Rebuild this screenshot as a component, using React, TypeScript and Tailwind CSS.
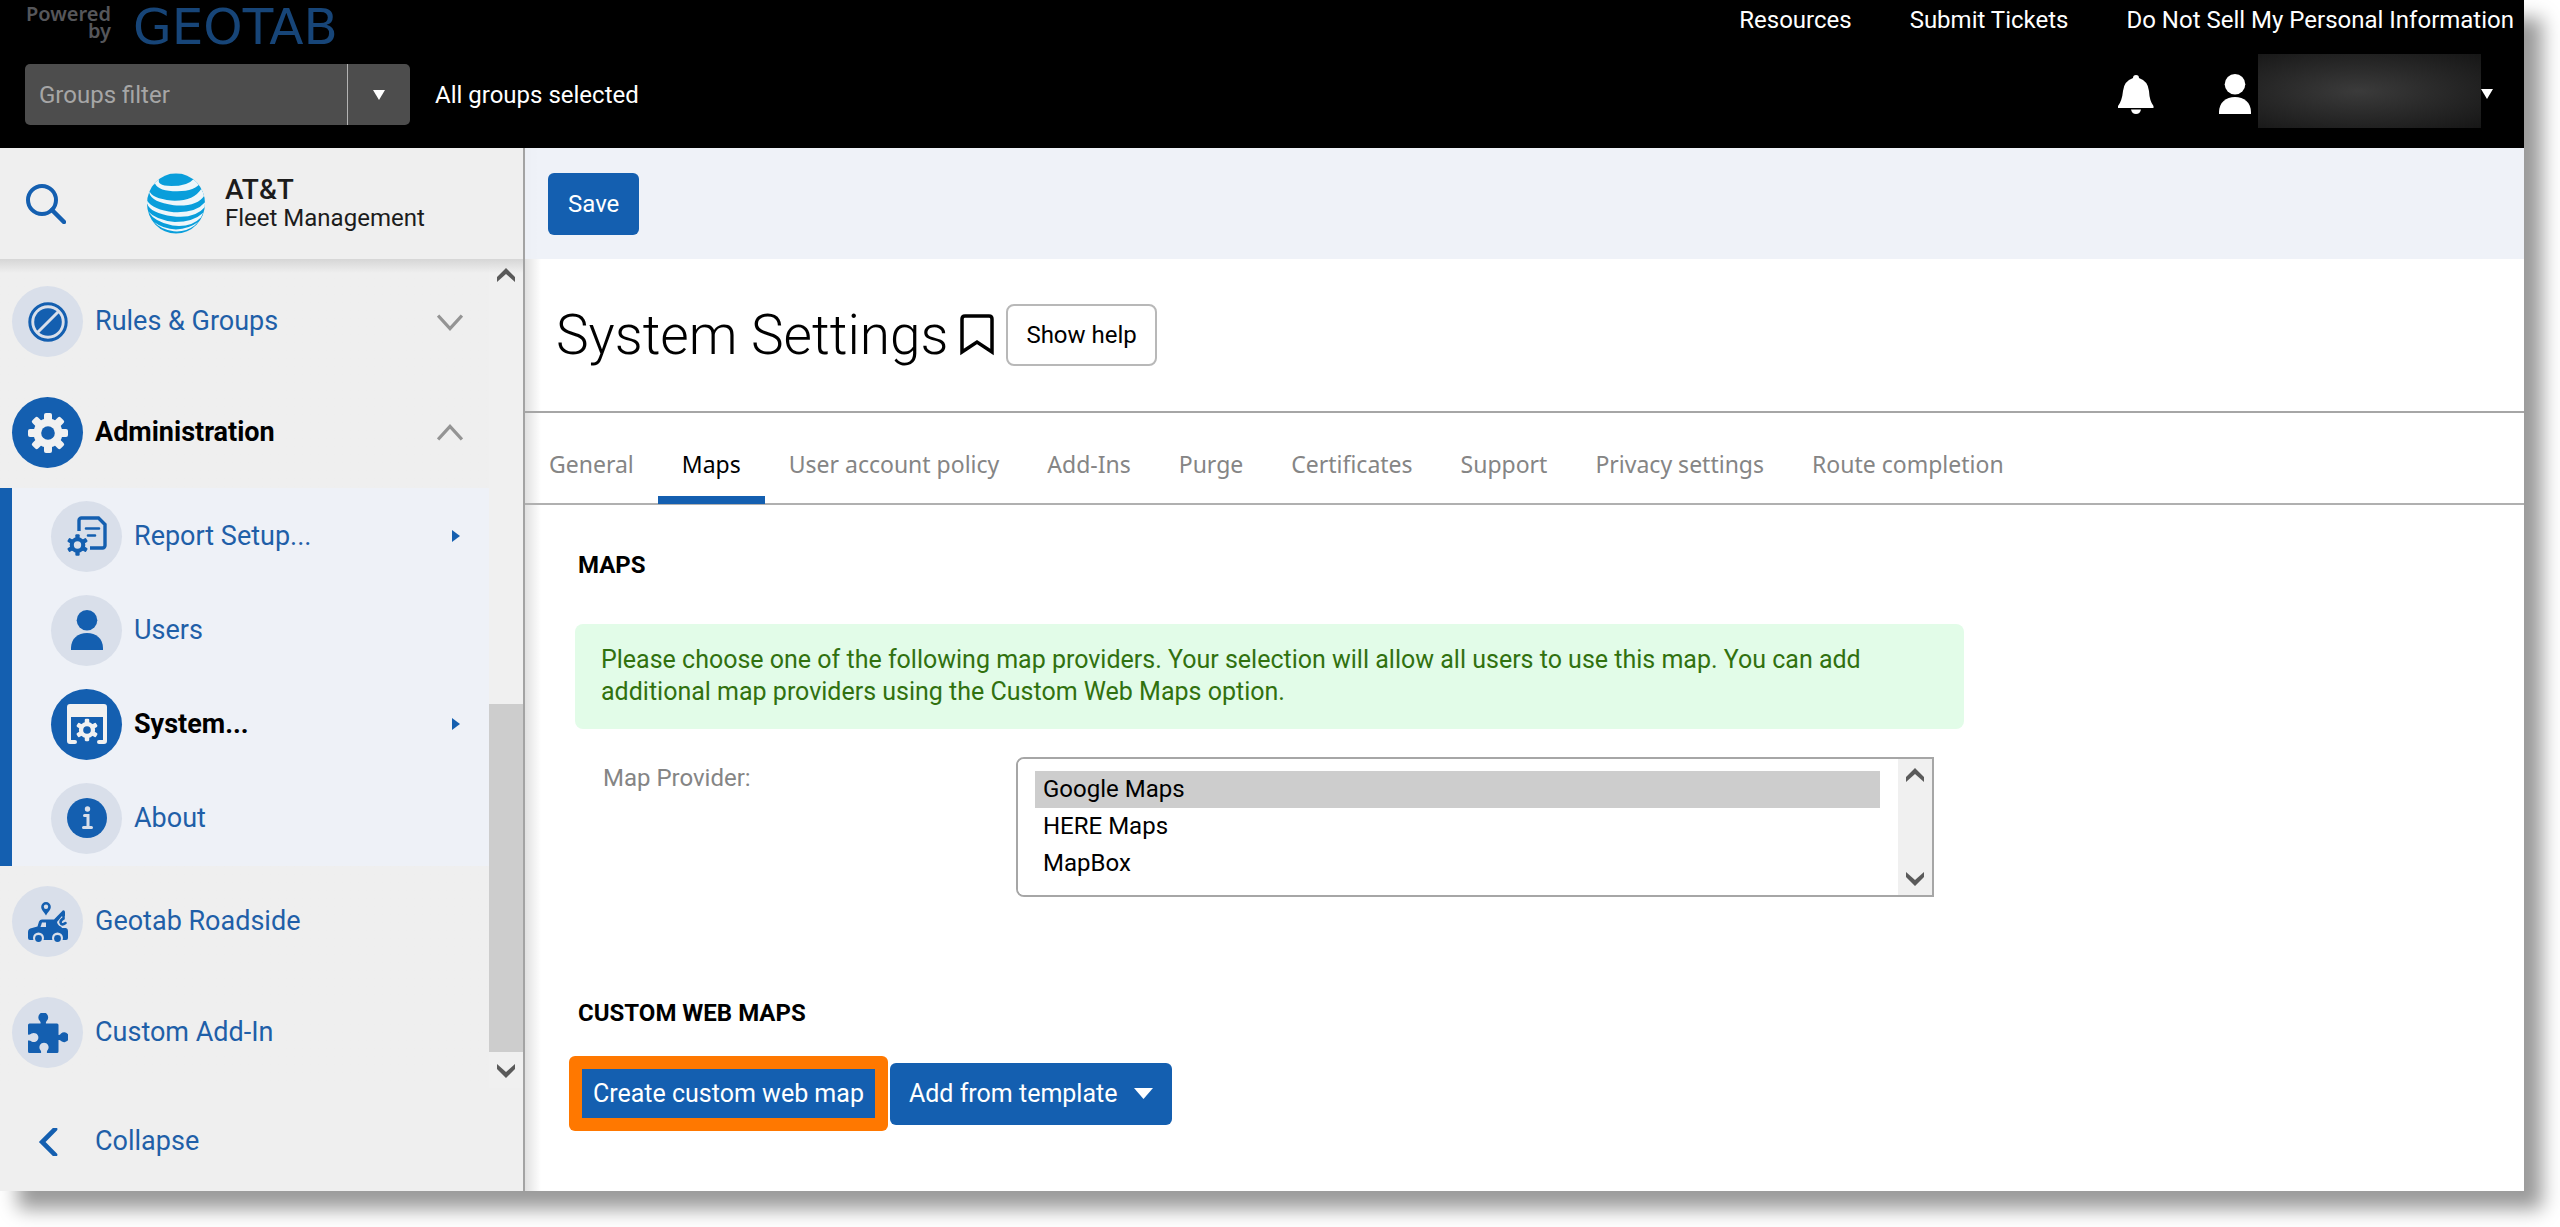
import { useState, type ReactNode } from 'react'
import clsx from 'clsx'

const TOP_LINKS = ['Resources', 'Submit Tickets', 'Do Not Sell My Personal Information']

const TABS = [
  'General',
  'Maps',
  'User account policy',
  'Add-Ins',
  'Purge',
  'Certificates',
  'Support',
  'Privacy settings',
  'Route completion',
]

const MAP_PROVIDERS = ['Google Maps', 'HERE Maps', 'MapBox']

function GearShape({ teeth, color, hole }: { teeth: number; color: string; hole: string }) {
  const angles = Array.from({ length: teeth }, (_, i) => (360 / teeth) * i)
  return (
    <g>
      {angles.map((angle) => (
        <rect
          key={angle}
          x="-4"
          y="-20"
          width="8"
          height="12"
          rx="2"
          fill={color}
          transform={`rotate(${angle})`}
        />
      ))}
      <circle r="14.5" fill={color} />
      <circle r="6.8" fill={hole} />
    </g>
  )
}

function RulesIcon() {
  return (
    <svg viewBox="0 0 40 40" className="size-10" aria-hidden="true">
      <circle cx="20" cy="20" r="18.2" fill="none" stroke="#145fb0" strokeWidth="3" />
      <circle cx="20" cy="20" r="13.8" fill="#145fb0" />
      <path d="M9 31 31 9" stroke="#d9dfea" strokeWidth="3" />
    </svg>
  )
}

function AdminIcon() {
  return (
    <svg viewBox="-20 -20 40 40" className="size-10" aria-hidden="true">
      <GearShape teeth={8} color="#f1f1f1" hole="#145fb0" />
    </svg>
  )
}

function ReportIcon() {
  return (
    <svg viewBox="0 0 40 40" className="size-10" fill="none" aria-hidden="true">
      <path
        d="M12 15V4.500A2.500 2.500 0 0 1 14.500 2H31.500L38 8.500V29.500A2.500 2.500 0 0 1 35.500 32H23"
        stroke="#145fb0"
        strokeWidth="3.400"
      />
      <path d="M19 12.500H32M21 19.500H28" stroke="#145fb0" strokeWidth="2.600" strokeLinecap="round" />
      <g transform="translate(10.500 29) scale(.54)">
        <GearShape teeth={6} color="#145fb0" hole="#d9dfea" />
      </g>
    </svg>
  )
}

function PersonIcon({ className }: { className: string }) {
  return (
    <svg viewBox="0 0 34 40" className={className} fill="currentColor" aria-hidden="true">
      <circle cx="17" cy="10.300" r="10.300" />
      <path d="M1 40V38C1 28.500 8 23 17 23S33 28.500 33 38V40Z" />
    </svg>
  )
}

function SystemIcon() {
  return (
    <svg viewBox="0 0 40 40" className="size-10" aria-hidden="true">
      <path
        d="M3 0H37A3 3 0 0 1 40 3V37A3 3 0 0 1 37 40H32A2 2 0 0 1 32 36H36V13H4V36H8A2 2 0 0 1 8 40H3A3 3 0 0 1 0 37V3A3 3 0 0 1 3 0Z"
        fill="#f1f1f1"
      />
      <g transform="translate(20 26) scale(.56)">
        <GearShape teeth={6} color="#f1f1f1" hole="#145fb0" />
      </g>
    </svg>
  )
}

function InfoIcon() {
  return (
    <svg viewBox="0 0 40 40" className="size-10" aria-hidden="true">
      <circle cx="20" cy="20" r="20" fill="#145fb0" />
      <circle cx="20.500" cy="11" r="2.700" fill="#d9dfea" />
      <path
        d="M17.500 17.500H21V29M16.500 29.500H24.500"
        fill="none"
        stroke="#d9dfea"
        strokeWidth="3"
        strokeLinecap="round"
      />
    </svg>
  )
}

function TowTruckIcon() {
  return (
    <svg viewBox="0 0 40 40" className="size-10" aria-hidden="true">
      <path
        d="M18 0A4.800 4.800 0 0 0 13.200 4.800C13.200 8 16 10 18 13.500 20 10 22.800 8 22.800 4.800A4.800 4.800 0 0 0 18 0Z"
        fill="#145fb0"
      />
      <circle cx="18" cy="4.800" r="2.200" fill="#d9dfea" />
      <path
        d="M2 38A2 2 0 0 1 0 36V30Q0 26.500 4 26L9.500 24.500 11 19.500Q11.800 17.500 14 17.500H26L35 8.200Q37 8 37 10V13.500L31 21 34 26H38Q40 26.500 40 29V36A2 2 0 0 1 38 38Z"
        fill="#145fb0"
      />
      <path d="M12.500 25 14 20.500H18V25Z" fill="#d9dfea" />
      <path d="M34 14 29 20Q30 26 38 25V14Z" fill="#d9dfea" />
      <path
        d="M35.500 12V16.500Q32.500 18 32.500 20.500 33.500 24 37.500 21"
        fill="none"
        stroke="#145fb0"
        strokeWidth="2.600"
        strokeLinecap="round"
      />
      <circle cx="10.500" cy="36" r="5.500" fill="#d9dfea" />
      <circle cx="29.500" cy="36" r="5.500" fill="#d9dfea" />
      <circle cx="10.500" cy="36.500" r="3.400" fill="#145fb0" />
      <circle cx="29.500" cy="36.500" r="3.400" fill="#145fb0" />
    </svg>
  )
}

function PuzzleIcon() {
  return (
    <svg viewBox="0 0 40 40" className="size-10" fill="#145fb0" aria-hidden="true">
      <path d="M1.500 10.500H12.500Q13 9 11.500 7.500A4.900 4.900 0 1 1 19 7.500Q17.500 9 18 10.500H29A1.500 1.500 0 0 1 30.500 12V22Q32 22 33 20.500A4.900 4.900 0 1 1 33 28Q32 26.500 30.500 27V38.500A1.500 1.500 0 0 1 29 40H19Q18.500 38 20 36.500A4.600 4.600 0 1 0 12 36.500Q13.500 38 13 40H1.500A1.500 1.500 0 0 1 0 38.500V27.500Q2 27 3.500 28.500A4.600 4.600 0 1 0 3.500 20.500Q2 22 0 21.500V12A1.500 1.500 0 0 1 1.500 10.500Z" />
    </svg>
  )
}

function GlobeLogo() {
  return (
    <svg viewBox="0 0 100 104" className="h-[61px] w-[58px]" aria-hidden="true">
      <clipPath id="globe">
        <ellipse cx="50" cy="52" rx="50" ry="52" />
      </clipPath>
      <g clipPath="url(#globe)">
        <rect width="100" height="104" fill="#099edb" />
        <g fill="#eef6fa">
          <path d="M10 8 22 8Q14 21 42 22 70 22 80 10L92 16Q84 31 52 31 20 31 14 18L0 26Z" />
          <path d="M4 30Q8 43 42 47 80 49 94 26L99 38Q86 58 46 55 8 50 4 34Z" />
          <path d="M0 47Q10 63 46 67 84 69 100 50V58Q82 79 44 74 6 69 0 52Z" />
          <path d="M2 66Q16 81 48 84 80 84 97 68L93 76Q76 94 44 90 14 85 2 66Z" />
          <path d="M12 84Q28 96 50 97 72 96 88 84L82 90Q66 102 46 100 24 97 12 84Z" />
        </g>
      </g>
    </svg>
  )
}

function Chevron({ d, className }: { d: string; className: string }) {
  return (
    <svg viewBox="0 0 24 24" className={className} fill="none" stroke="currentColor" aria-hidden="true">
      <path d={d} />
    </svg>
  )
}

function CaretDown({ className }: { className: string }) {
  return (
    <svg
      viewBox="0 0 12 10"
      preserveAspectRatio="none"
      className={className}
      fill="currentColor"
      aria-hidden="true"
    >
      <path d="M0 0H12L6 10Z" />
    </svg>
  )
}

function ScrollArrow({ up }: { up?: boolean }) {
  return (
    <svg viewBox="0 0 18 14" className="h-[14px] w-[18px] shrink-0" fill="#5a5a5a" aria-hidden="true">
      {up ? <path d="M9 0 18 9V14L9 6 0 14V9Z" /> : <path d="M9 14 0 5V0L9 8 18 0V5Z" />}
    </svg>
  )
}

type NavItemProps = {
  label: string
  icon: ReactNode
  active?: boolean
  nested?: boolean
  trailing?: ReactNode
}

function NavItem({ label, icon, active, nested, trailing }: NavItemProps) {
  return (
    <li>
      <a
        href="#"
        className={clsx(
          'flex items-center gap-3 pr-[26px] text-[27px]',
          nested ? 'h-[94px] pl-[39px]' : 'h-[111px] pl-3',
          active ? 'font-bold text-black' : 'text-[#1f5fa8]',
        )}
      >
        <span
          className={clsx(
            'flex size-[71px] shrink-0 items-center justify-center rounded-full',
            active ? 'bg-[#145fb0]' : 'bg-[#d9dfea] text-[#145fb0]',
          )}
        >
          {icon}
        </span>
        <span className="flex-1">{label}</span>
        {trailing}
      </a>
    </li>
  )
}

function SubmenuArrow() {
  return (
    <svg viewBox="0 0 8 12" className="mr-[3px] h-3 w-2 text-[#145fb0]" fill="currentColor" aria-hidden="true">
      <path d="M0 0 8 6 0 12Z" />
    </svg>
  )
}

function Header() {
  return (
    <header className="flex h-[148px] justify-between bg-black text-[24px] text-white">
      <div className="flex flex-col justify-between pb-[23px] pl-[25px]">
        <div className="flex h-[42px] items-start gap-[22px]">
          <span className="w-[86px] pt-[5px] text-right font-['Noto_Sans'] text-[20px] leading-[17px] font-semibold text-[#55565a]">
            Powered by
          </span>
          <span className="font-['DejaVu_Sans'] text-[50px] leading-[54px] text-[#174578]">GEOTAB</span>
        </div>
        <div className="flex items-center gap-[25px]">
          <div className="flex h-[61px] w-[385px] overflow-hidden rounded-[5px] bg-[#4d4d4d]">
            <input
              aria-label="Groups filter"
              placeholder="Groups filter"
              className="min-w-0 flex-1 px-[14px] placeholder:text-[#a6a6a6]"
            />
            <button
              aria-label="Open groups filter"
              className="flex w-[63px] items-center justify-center border-l border-[#b3b3b3]"
            >
              <CaretDown className="h-[10px] w-3" />
            </button>
          </div>
          <span>All groups selected</span>
        </div>
      </div>
      <div className="flex flex-col justify-between pb-[14px]">
        <nav className="flex gap-[58px] pr-[10px] leading-10">
          {TOP_LINKS.map((link) => (
            <a key={link} href="#">
              {link}
            </a>
          ))}
        </nav>
        <div className="flex items-center justify-end pr-[31px]">
          <button aria-label="Notifications" className="mr-[64px]">
            <svg viewBox="0 0 36 40" className="h-10 w-9" fill="currentColor" aria-hidden="true">
              <path d="M15 4A3 3 0 0 1 21 4Q30 7 31 17 31.500 27 35.500 32V34H0V32Q4 27 5 17 6 7 15 4Z" />
              <path d="M13 35.500H23Q22 40 18 40T13 35.500Z" />
            </svg>
          </button>
          <button aria-label="Account" className="flex items-center">
            <PersonIcon className="h-10 w-[34px]" />
            <span className="mb-[6px] ml-[6px] h-[74px] w-[223px] bg-[radial-gradient(ellipse_at_45%_50%,#3b3b3b_0%,#2a2a2a_45%,#161616_100%)]" />
            <CaretDown className="h-[10px] w-3" />
          </button>
        </div>
      </div>
    </header>
  )
}

function Sidebar() {
  return (
    <aside className="flex w-[525px] shrink-0 flex-col border-r-2 border-[#a3a3a3] bg-[#efefef]">
      <div className="flex h-[111px] shrink-0 items-center pl-[26px]">
        <button aria-label="Search" className="mr-[81px] text-[#145fb0]">
          <svg viewBox="0 0 40 40" className="size-10" fill="none" stroke="currentColor" aria-hidden="true">
            <circle cx="16" cy="16" r="14" strokeWidth="4" />
            <path d="M26 26 38 38" strokeWidth="4.500" strokeLinecap="round" />
          </svg>
        </button>
        <GlobeLogo />
        <div className="ml-[20px] text-[24px] leading-7 text-[#1c1c1c]">
          <div className="text-[28px] font-medium">AT&T</div>
          <div>Fleet Management</div>
        </div>
      </div>
      <div className="flex">
        <nav className="flex-1 bg-linear-to-b from-[#d6d6d6] to-[#efefef] to-[14px] pt-[7px]">
          <ul>
            <NavItem
              label="Rules & Groups"
              icon={<RulesIcon />}
              trailing={<Chevron d="M1 6 12 18 23 6" className="size-[26px] stroke-3 text-[#949494]" />}
            />
            <NavItem
              label="Administration"
              icon={<AdminIcon />}
              active
              trailing={<Chevron d="M1 18 12 6 23 18" className="size-[26px] stroke-3 text-[#949494]" />}
            />
          </ul>
          <ul className="border-l-12 border-[#145fb0] bg-[#eef1f7] py-px">
            <NavItem label="Report Setup..." icon={<ReportIcon />} nested trailing={<SubmenuArrow />} />
            <NavItem label="Users" icon={<PersonIcon className="h-10 w-[34px]" />} nested />
            <NavItem label="System..." icon={<SystemIcon />} active nested trailing={<SubmenuArrow />} />
            <NavItem label="About" icon={<InfoIcon />} nested />
          </ul>
          <ul>
            <NavItem label="Geotab Roadside" icon={<TowTruckIcon />} />
            <NavItem label="Custom Add-In" icon={<PuzzleIcon />} />
          </ul>
        </nav>
        <div className="flex w-[34px] flex-col items-center bg-linear-to-b from-[#d6d6d6] to-[#f0f0f0] to-[14px] pt-[9px] pb-[10px]">
          <ScrollArrow up />
          <div className="flex-1" />
          <div className="mb-3 h-[348px] w-full bg-[#cdcdcd]" />
          <ScrollArrow />
        </div>
      </div>
      <button className="flex flex-1 items-center gap-3 pt-1 pl-3 text-[27px] text-[#1f5fa8]">
        <span className="flex w-[71px] justify-center">
          <Chevron d="M18 1 7 12 18 23" className="size-[28px] stroke-4 text-[#145fb0] [stroke-linecap:round]" />
        </span>
        Collapse
      </button>
    </aside>
  )
}

function MapProviderField() {
  const [provider, setProvider] = useState('Google Maps')
  return (
    <div className="flex max-w-[1359px] items-start justify-between pl-[28px]">
      <label htmlFor="map-provider" className="pt-[3px] text-[#858585]">
        Map Provider:
      </label>
      <div className="flex h-[140px] w-[918px] overflow-hidden rounded-l-lg border-2 border-[#a6a6a6]">
        <select
          id="map-provider"
          size={3}
          value={provider}
          onChange={(e) => setProvider(e.target.value)}
          className="min-w-0 flex-1 appearance-none overflow-hidden bg-white py-3 pr-[18px] pl-[17px] text-[24px] text-black outline-none"
        >
          {MAP_PROVIDERS.map((name) => (
            <option key={name} className="h-[37px] px-2 pt-1 checked:bg-[#cdcdcd] checked:text-black">
              {name}
            </option>
          ))}
        </select>
        <div className="flex w-[34px] flex-col items-center justify-between bg-[#f0f0f0] py-[9px]">
          <ScrollArrow up />
          <ScrollArrow />
        </div>
      </div>
    </div>
  )
}

export default function App() {
  const [activeTab, setActiveTab] = useState('Maps')

  return (
    <div className="flex min-h-screen bg-white pr-9 pb-9 font-['Roboto',sans-serif] text-[24px] text-black">
      <div className="flex min-w-0 flex-1 flex-col shadow-[18px_18px_18px_rgba(0,0,0,0.4)]">
        <Header />
        <div className="flex flex-1">
          <Sidebar />
          <main className="min-w-0 flex-1 bg-white bg-linear-to-r from-black/12 to-transparent to-[16px]">
            <div className="flex h-[111px] items-center bg-[#edf1f7]/90 pl-[23px]">
              <button className="h-[62px] rounded-[6px] bg-[#145fb0] px-5 text-white">Save</button>
            </div>
            <div className="flex h-[154px] items-center border-b-2 border-[#a6a6a6] pl-[31px]">
              <h1 className="text-[55px] font-light">System Settings</h1>
              <button aria-label="Bookmark page" className="mr-[12px] ml-[12px]">
                <svg viewBox="0 0 34 42" className="h-[42px] w-[34px]" fill="none" stroke="currentColor" aria-hidden="true">
                  <path d="M2 38V5Q2 2 5 2H29Q32 2 32 5V38L17 28Z" strokeWidth="3.500" />
                </svg>
              </button>
              <button className="h-[62px] rounded-[8px] border-2 border-[#b8b8b8] bg-white px-[18px]">Show help</button>
            </div>
            <div
              role="tablist"
              className="flex h-[92px] items-end border-b-2 border-[#b0b0b0] font-['Noto_Sans'] text-[23px]"
            >
              {TABS.map((tab) => (
                <button
                  key={tab}
                  role="tab"
                  aria-selected={tab === activeTab}
                  onClick={() => setActiveTab(tab)}
                  className={clsx(
                    '-mb-px h-[66px] border-b-8 px-6 pb-[6px]',
                    tab === activeTab ? 'border-[#145fb0] text-black' : 'border-transparent text-[#858585]',
                  )}
                >
                  {tab}
                </button>
              ))}
            </div>
            <section className="pt-[42px] pr-6 pl-[50px]">
              <h2 className="pl-[3px] leading-9 font-bold">MAPS</h2>
              <p className="mt-[41px] mb-[28px] max-w-[1389px] rounded-[8px] bg-[#e2fce8] px-[26px] pt-[20px] pb-[21px] text-[25px] leading-8 text-[#31710f]">
                Please choose one of the following map providers. Your selection will allow all users to use this map. You
                can add additional map providers using the Custom Web Maps option.
              </p>
              <MapProviderField />
            </section>
            <section className="pt-[98px] pr-6 pl-[44px]">
              <h2 className="pl-[9px] leading-9 font-bold">CUSTOM WEB MAPS</h2>
              <div className="mt-[25px] flex items-center gap-[2px] text-[25px]">
                <div className="rounded-[6px] bg-[#ff7800] p-[13px]">
                  <button className="block h-[49px] bg-[#145fb0] px-[11px] text-white">Create custom web map</button>
                </div>
                <button className="flex h-[62px] items-center gap-[17px] rounded-[6px] bg-[#145fb0] px-[19px] text-white">
                  Add from template
                  <CaretDown className="h-[11px] w-[19px]" />
                </button>
              </div>
            </section>
          </main>
        </div>
      </div>
    </div>
  )
}
